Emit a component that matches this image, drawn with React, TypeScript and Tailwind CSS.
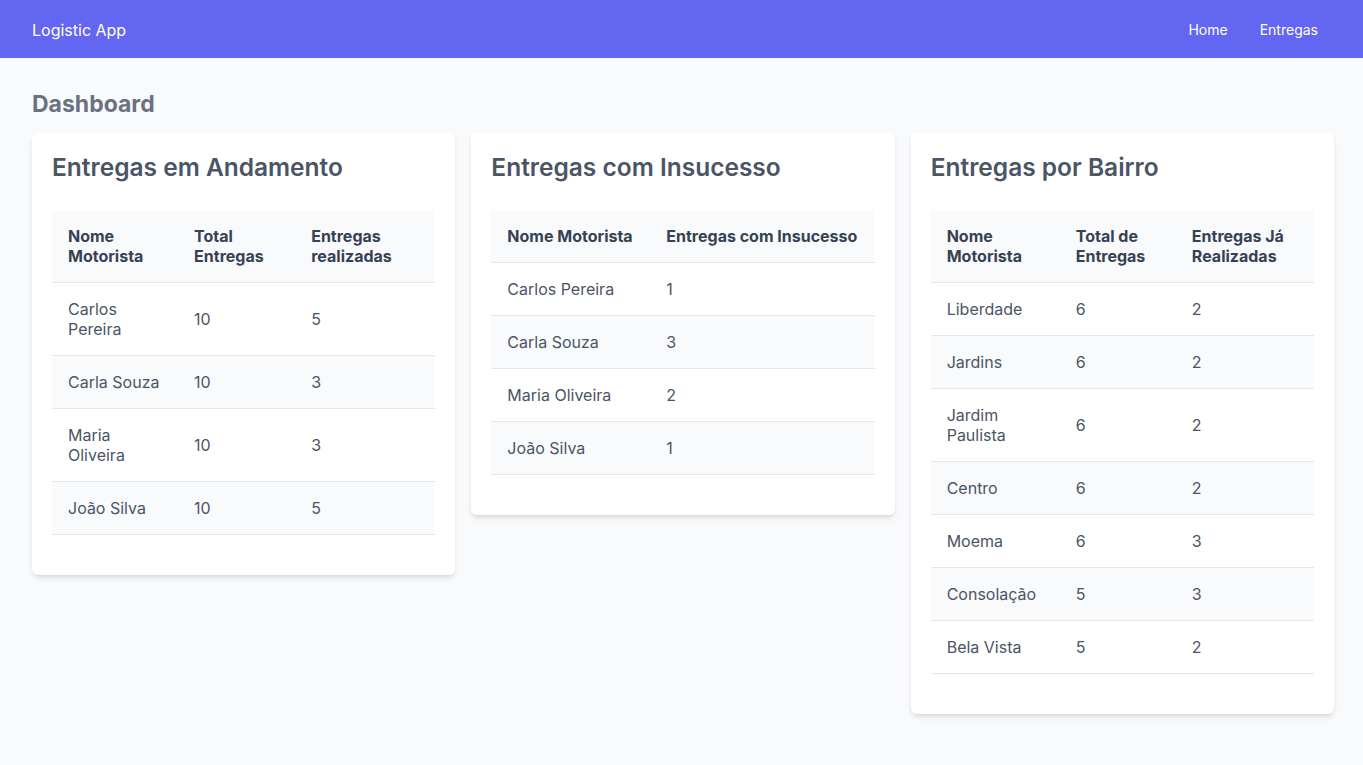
import React from 'react';

type Column = { label: string; width: string };

type Card = {
  title: string;
  columns: Column[];
  rows: (string | number)[][];
};

const CARDS: Card[] = [
  {
    title: 'Entregas em Andamento',
    columns: [
      { label: 'Nome Motorista', width: 'w-[126px]' },
      { label: 'Total Entregas', width: 'w-[117px]' },
      { label: 'Entregas realizadas', width: 'w-[140px]' },
    ],
    rows: [
      ['Carlos Pereira', 10, 5],
      ['Carla Souza', 10, 3],
      ['Maria Oliveira', 10, 3],
      ['João Silva', 10, 5],
    ],
  },
  {
    title: 'Entregas com Insucesso',
    columns: [
      { label: 'Nome Motorista', width: 'w-[159px]' },
      { label: 'Entregas com Insucesso', width: 'w-[225px]' },
    ],
    rows: [
      ['Carlos Pereira', 1],
      ['Carla Souza', 3],
      ['Maria Oliveira', 2],
      ['João Silva', 1],
    ],
  },
  {
    title: 'Entregas por Bairro',
    columns: [
      { label: 'Nome Motorista', width: 'w-[129px]' },
      { label: 'Total de Entregas', width: 'w-[116px]' },
      { label: 'Entregas Já Realizadas', width: 'w-[138px]' },
    ],
    rows: [
      ['Liberdade', 6, 2],
      ['Jardins', 6, 2],
      ['Jardim Paulista', 6, 2],
      ['Centro', 6, 2],
      ['Moema', 6, 3],
      ['Consolação', 5, 3],
      ['Bela Vista', 5, 2],
    ],
  },
];

function DashboardCard({ card }: { card: Card }) {
  return (
    <div className="bg-white rounded-md shadow-md p-5">
      <h2 className="text-[24.5px] leading-7 font-semibold text-gray-600 mb-[29px]">{card.title}</h2>
      <table className="w-full table-fixed border-collapse mb-5">
        <thead>
          <tr className="bg-gray-50 border-b border-gray-200">
            {card.columns.map((col) => (
              <th key={col.label} className={`${col.width} px-4 py-4 text-left font-bold text-gray-700 leading-5`}>
                {col.label}
              </th>
            ))}
          </tr>
        </thead>
        <tbody>
          {card.rows.map((row, i) => (
            <tr key={i} className={`border-b border-gray-200 ${i % 2 === 1 ? 'bg-gray-50' : 'bg-white'}`}>
              {row.map((cell, j) => (
                <td key={j} className="px-4 py-4 text-gray-600 leading-5">
                  {cell}
                </td>
              ))}
            </tr>
          ))}
        </tbody>
      </table>
    </div>
  );
}

export default function App() {
  return (
    <div className="min-h-screen bg-gray-50 font-['Inter',sans-serif]">
      <nav className="h-[58px] bg-[#6366f1] flex items-center justify-between pl-8 pr-[45px] pt-px">
        <span className="text-white text-base">Logistic App</span>
        <div className="flex items-center gap-8">
          <a className="text-white text-sm">Home</a>
          <a className="text-white text-sm">Entregas</a>
        </div>
      </nav>

      <main className="pl-8 pr-[29px] pt-[30px] pb-8">
        <h1 className="text-[23px] leading-8 font-bold text-gray-500 mb-[13px]">Dashboard</h1>
        <div className="grid grid-cols-3 gap-4 items-start">
          {CARDS.map((card) => (
            <DashboardCard key={card.title} card={card} />
          ))}
        </div>
      </main>
    </div>
  );
}
